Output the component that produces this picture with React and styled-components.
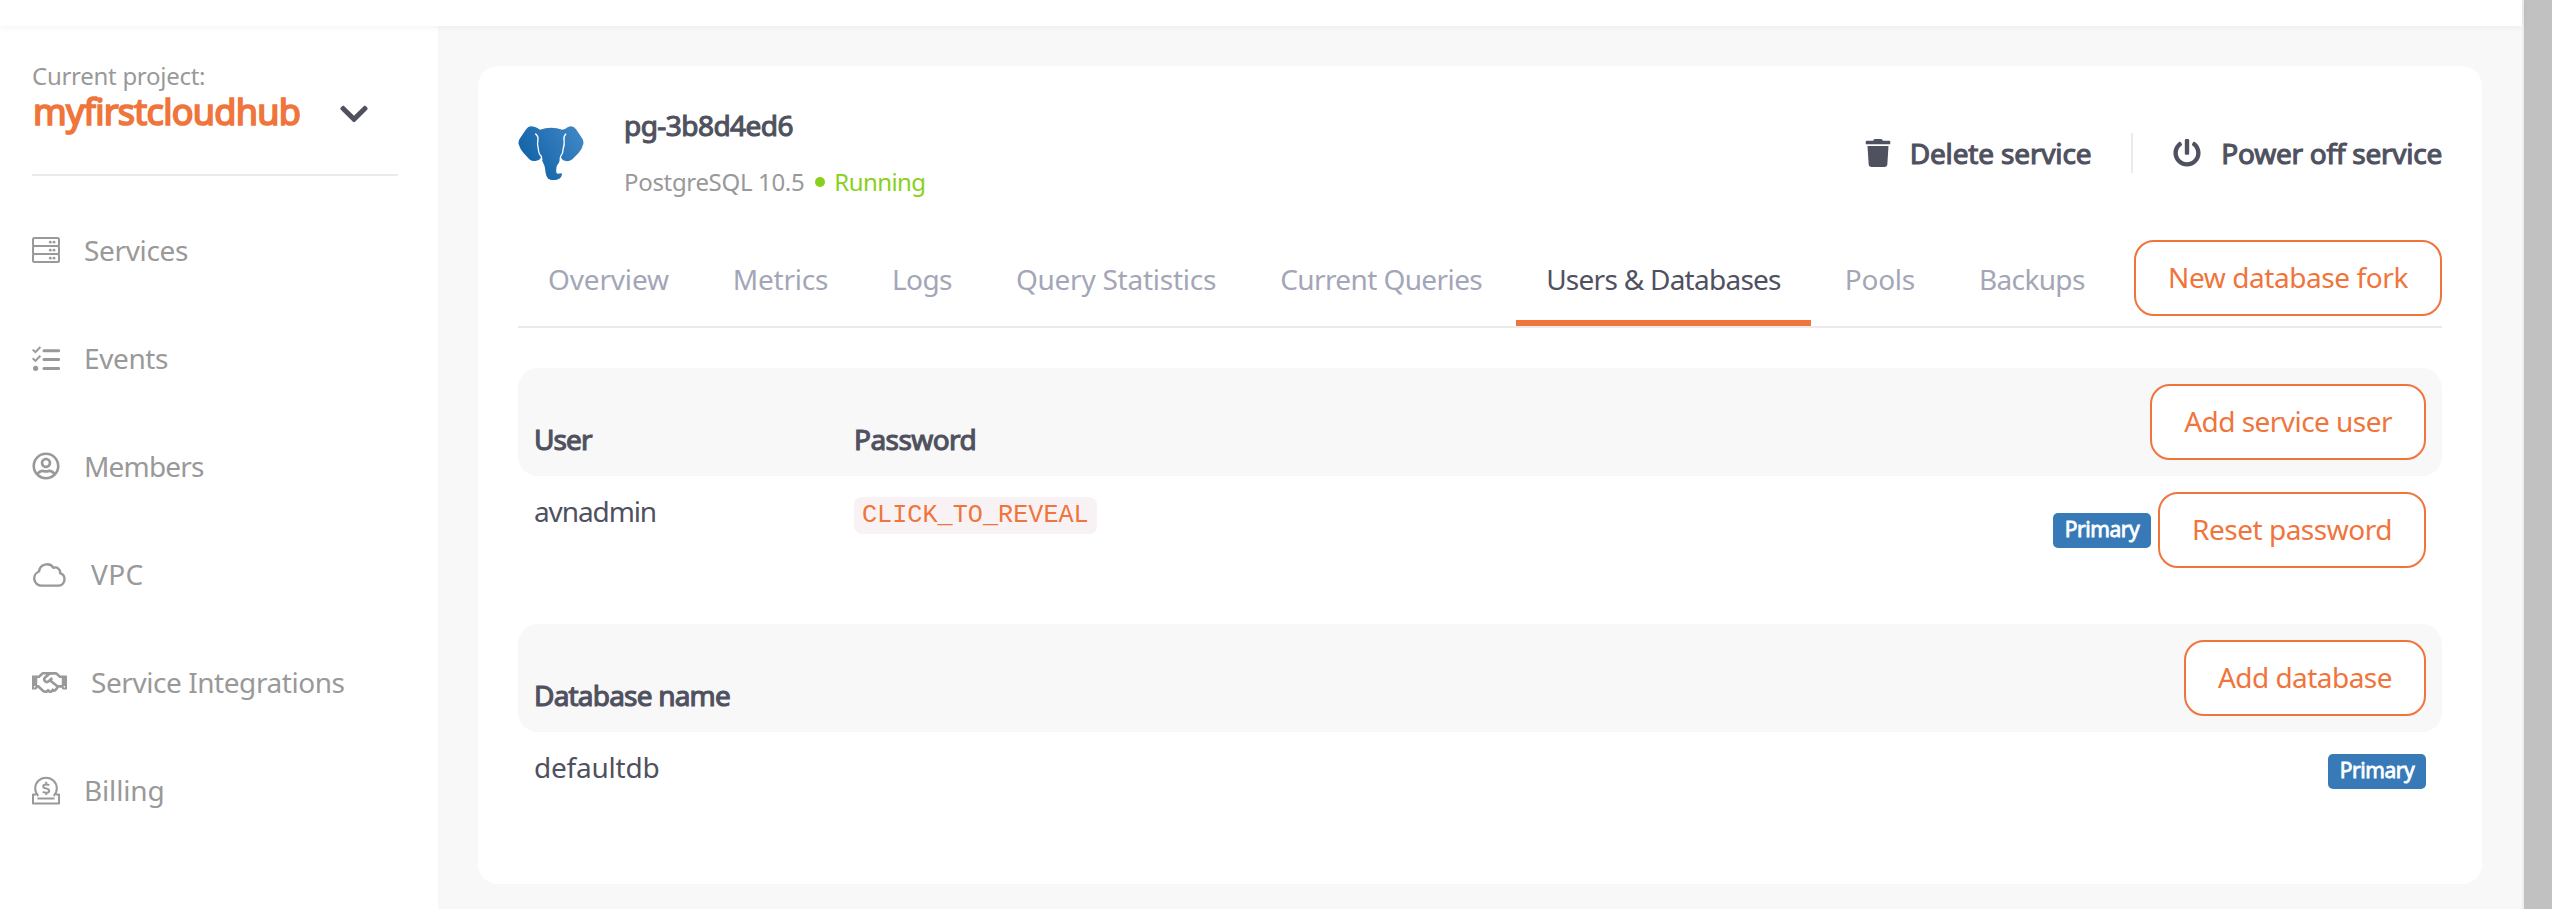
import React from 'react';
import styled, { createGlobalStyle, css } from 'styled-components';
import { FaChevronDown, FaPowerOff, FaRegHandshake, FaRegUserCircle, FaTrash } from 'react-icons/fa';

const orange = '#ef753c';
const dark = '#4f515f';
const gray = '#999';
const muted = '#a3a6b7';
const line = '#ebebeb';
const pale = '#f8f8f8';

const GlobalStyle = createGlobalStyle`
  * { box-sizing: border-box; }
  body {
    margin: 0;
    overflow: hidden;
    background: #fff;
    color: ${dark};
    font: 28px/40px "Noto Sans", "Open Sans", sans-serif;
    white-space: nowrap;
  }
  svg { display: block; flex: none; }
`;

const heavy = css`
  -webkit-text-stroke: 1.1px currentColor;
`;

const Label = styled.span`
  letter-spacing: ${(p) => p.$track ?? 0}px;
`;

const Page = styled.div`
  display: flex;
  height: 909px;
`;

const Shell = styled.div`
  flex: 1;
  min-width: 0;
  display: flex;
  flex-direction: column;
`;

const Scrollbar = styled.div`
  flex: none;
  width: 30px;
  background: #c1c1c1;
  border-left: 2px solid #eee;
`;

const TopBar = styled.header`
  position: relative;
  z-index: 1;
  flex: none;
  height: 26px;
  background: #fff;
  box-shadow: 0 0 8px rgba(0, 0, 0, 0.07);
`;

const Body = styled.div`
  flex: 1;
  display: flex;
`;

const Sidebar = styled.aside`
  flex: none;
  width: 438px;
  padding: 30px 40px 0 32px;
  background: #fff;
`;

const Project = styled.div`
  padding-bottom: 46px;
  border-bottom: 2px solid ${line};
`;

const ProjectCaption = styled.div`
  font-size: 24px;
  color: ${gray};
`;

const ProjectPicker = styled.div`
  display: flex;
  align-items: center;
  justify-content: space-between;
  height: 32px;
  padding: 0 28px 0 1px;
  font-size: 36px;
  line-height: 32px;

  ${Label} {
    ${heavy}
    -webkit-text-stroke-width: 1.7px;
    color: ${orange};
  }
  svg { position: relative; top: 2px; }
`;

const Nav = styled.nav`
  padding-top: 20px;
  color: ${gray};
`;

const NavItem = styled.a`
  display: flex;
  align-items: center;
  gap: 24px;
  height: 108px;
`;

const Main = styled.main`
  flex: 1;
  padding: 40px 40px 25px;
  background: ${pale};
`;

const Card = styled.section`
  height: 818px;
  padding: 0 40px;
  border-radius: 20px;
  background: #fff;
`;

const ServiceHeader = styled.div`
  display: flex;
  align-items: center;
  height: 174px;
`;

const ServiceInfo = styled.div`
  flex: 1;
  display: flex;
  flex-direction: column;
  gap: 17px;
  margin-left: 40px;
`;

const ServiceName = styled.div`
  ${heavy}
`;

const ServiceStatus = styled.div`
  display: flex;
  align-items: center;
  font-size: 24px;
  color: ${gray};
`;

const Running = styled.span`
  display: flex;
  align-items: center;
  gap: 9px;
  margin-left: 11px;
  color: #87d11b;

  &::before {
    content: '';
    width: 10px;
    height: 10px;
    border-radius: 50%;
    background: currentColor;
  }
`;

const HeaderAction = styled.div`
  display: flex;
  align-items: center;
  gap: ${(p) => p.$gap ?? 20}px;

  ${Label} { ${heavy} }

  & + & {
    margin-left: 40px;
    padding-left: 40px;
    border-left: 2px solid ${line};
  }
`;

const TabBar = styled.div`
  display: flex;
  gap: 4px;
  height: 88px;
  border-bottom: 2px solid ${line};
`;

const Tab = styled.a`
  height: 86px;
  padding: 0 30px;
  line-height: 78px;
  color: ${(p) => (p.$active ? dark : muted)};
  border-bottom: 6px solid ${(p) => (p.$active ? orange : 'transparent')};
`;

const OutlineButton = styled.button`
  height: 76px;
  padding: 0 32px 2px;
  border: 2px solid ${orange};
  border-radius: 20px;
  background: #fff;
  color: ${orange};
  font: inherit;
  line-height: 70px;
  ${(p) => p.$end && 'margin-left: auto;'}
`;

const Table = styled.div`
  margin-top: 40px;
`;

const TableHead = styled.div`
  display: flex;
  height: 108px;
  padding: 16px;
  border-radius: 20px;
  background: ${pale};
`;

const HeadCell = styled.div`
  align-self: flex-end;
  width: 320px;
  margin-bottom: 1px;
  ${heavy}
`;

const TableRow = styled.div`
  display: flex;
  align-items: flex-start;
  padding: 16px;
`;

const Cell = styled.div`
  width: 320px;
  line-height: 38px;
`;

const Secret = styled.code`
  display: block;
  margin-top: 5px;
  padding: 0 8px;
  border-radius: 8px;
  background: #f9f2f4;
  color: ${orange};
  font: 25.2px/37px "Liberation Mono", monospace;
`;

const RowActions = styled.div`
  display: flex;
  align-items: center;
  gap: 7px;
  margin-left: auto;
  padding-top: ${(p) => p.$offset ?? 0}px;
`;

const Badge = styled.span`
  height: 35px;
  width: 98px;
  border-radius: 5px;
  background: #377ab7;
  color: #fff;
  font-size: 21px;
  line-height: 32px;
  text-align: center;
  letter-spacing: -0.45px;
  -webkit-text-stroke: 0.8px #fff;
`;

const ServicesIcon = () => (
  <svg width="28" height="26" viewBox="0 0 28 26" fill="none" stroke="currentColor" strokeWidth="2">
    <rect x="1" y="1" width="26" height="8" rx="1.5" />
    <rect x="1" y="9" width="26" height="8" rx="1.5" />
    <rect x="1" y="17" width="26" height="8" rx="1.5" />
    <g fill="currentColor" stroke="none">
      {[5.2, 13.2, 21.2].map((y) => (
        <React.Fragment key={y}>
          <circle cx="18.3" cy={y} r="1.4" />
          <circle cx="22" cy={y} r="1.4" />
        </React.Fragment>
      ))}
    </g>
  </svg>
);

const EventsIcon = () => (
  <svg width="28" height="25" viewBox="0 0 28 25" fill="none" stroke="currentColor">
    <path d="M.7 3.6 3.4 6.2 8.4 1M.7 12.3l2.7 2.6 5-5.2" strokeWidth="2" />
    <path d="M12 4.7h14.7M12 13.4h14.7M12 22.4h14.7" strokeWidth="3" strokeLinecap="round" />
    <circle cx="3.6" cy="22.3" r="2.6" fill="currentColor" stroke="none" />
  </svg>
);

const CloudIcon = () => (
  <svg width="35" height="25" viewBox="0 0 35 25" fill="none" stroke="currentColor" strokeWidth="2.4" strokeLinejoin="round">
    <path d="M8.8 23.6A7.3 7.3 0 0 1 7 9.5A8 8 0 0 1 21.5 5.8A4.8 4.8 0 0 1 28 11.2A6.4 6.4 0 0 1 27.2 23.6Z" />
  </svg>
);

const BillingIcon = () => (
  <svg width="28" height="29" viewBox="0 0 28 29" fill="none" stroke="currentColor" strokeWidth="2" strokeLinejoin="round">
    <path d="M6.3 20A10.8 10.8 0 1 1 21.7 20" />
    <path d="M4 18.5H1V27.5H27V18.5H24M5.5 22.5H22.5" />
    <path d="M17.2 9.4C16 8.2 11.2 7.7 11.2 10.4C11.2 13 17.2 11.7 17.2 14.8C17.2 17.6 12 17.1 10.8 15.7M14.2 5.8V8M14.2 17V19" />
  </svg>
);

const PostgresLogo = () => (
  <svg width="66" height="54" viewBox="0 0 197 163">
    <defs>
      <linearGradient id="elephant" x1="0" y1="0.7" x2="1" y2="0.2">
        <stop offset="0" stopColor="#0d60a5" />
        <stop offset="1" stopColor="#4086c5" />
      </linearGradient>
    </defs>
    <path
      fill="url(#elephant)"
      d="M38 1Q29 2 24 9L7 34Q-2 46 1 55Q5 69 15 81L34 101Q43 108 54 105Q64 103 67 97L70 92Q70 105 76 114Q81 121 81 133Q83 153 91 160Q101 165 116 162Q128 160 131 149Q133 142 128 143Q119 146 115 142Q113 134 116 121Q127 106 126 93L130 97Q133 104 144 106Q154 107 163 100L181 82Q193 69 196 54Q198 45 191 35L174 10Q167 0 157 1Q148 3 142 8L133 11Q99 -1 65 11Q49 1 38 1Z"
    />
    <path
      d="M51 23Q61 30 59 43Q56 56 60 67Q61 84 69 91L71 102M144 23Q135 33 138 43Q140 56 135 70Q135 83 128 91L126 101"
      fill="none"
      stroke="#fff"
      strokeWidth="4"
    />
  </svg>
);

const navItems = [
  { text: 'Services', track: -0.34, icon: <ServicesIcon /> },
  { text: 'Events', track: -0.4, icon: <EventsIcon /> },
  { text: 'Members', track: -0.82, icon: <FaRegUserCircle size={28} /> },
  { text: 'VPC', track: 0.38, icon: <CloudIcon /> },
  { text: 'Service Integrations', track: -0.44, icon: <FaRegHandshake size={35} /> },
  { text: 'Billing', track: -0.15, icon: <BillingIcon /> },
];

const tabs = [
  { text: 'Overview', track: -0.16 },
  { text: 'Metrics', track: -0.25 },
  { text: 'Logs', track: -0.6 },
  { text: 'Query Statistics', track: -0.25 },
  { text: 'Current Queries', track: -0.6 },
  { text: 'Users & Databases', track: -0.74, active: true },
  { text: 'Pools', track: -0.26 },
  { text: 'Backups', track: -0.64 },
];

export default function App() {
  return (
    <Page>
      <GlobalStyle />
      <Shell>
        <TopBar />
        <Body>
          <Sidebar>
            <Project>
              <ProjectCaption><Label $track={-0.28}>Current project:</Label></ProjectCaption>
              <ProjectPicker>
                <Label $track={-0.74}>myfirstcloudhub</Label>
                <FaChevronDown size={32} />
              </ProjectPicker>
            </Project>
            <Nav>
              {navItems.map((item) => (
                <NavItem key={item.text}>
                  {item.icon}
                  <Label $track={item.track}>{item.text}</Label>
                </NavItem>
              ))}
            </Nav>
          </Sidebar>
          <Main>
            <Card>
              <ServiceHeader>
                <PostgresLogo />
                <ServiceInfo>
                  <ServiceName><Label $track={-0.55}>pg-3b8d4ed6</Label></ServiceName>
                  <ServiceStatus>
                    <Label $track={-0.33}>PostgreSQL 10.5</Label>
                    <Running><Label $track={-0.57}>Running</Label></Running>
                  </ServiceStatus>
                </ServiceInfo>
                <HeaderAction $gap={18}>
                  <FaTrash size={28} />
                  <Label $track={-0.16}>Delete service</Label>
                </HeaderAction>
                <HeaderAction>
                  <FaPowerOff size={28} />
                  <Label $track={-0.25}>Power off service</Label>
                </HeaderAction>
              </ServiceHeader>
              <TabBar>
                {tabs.map((tab) => (
                  <Tab key={tab.text} $active={tab.active}>
                    <Label $track={tab.track}>{tab.text}</Label>
                  </Tab>
                ))}
                <OutlineButton $end><Label $track={-0.42}>New database fork</Label></OutlineButton>
              </TabBar>
              <Table>
                <TableHead>
                  <HeadCell><Label $track={-0.89}>User</Label></HeadCell>
                  <HeadCell><Label $track={-0.55}>Password</Label></HeadCell>
                  <OutlineButton $end><Label $track={-0.54}>Add service user</Label></OutlineButton>
                </TableHead>
                <TableRow>
                  <Cell><Label $track={-1.1}>avnadmin</Label></Cell>
                  <Secret>CLICK_TO_REVEAL</Secret>
                  <RowActions>
                    <Badge>Primary</Badge>
                    <OutlineButton><Label $track={-0.48}>Reset password</Label></OutlineButton>
                  </RowActions>
                </TableRow>
              </Table>
              <Table>
                <TableHead>
                  <HeadCell><Label $track={-0.8}>Database name</Label></HeadCell>
                  <OutlineButton $end><Label $track={-0.54}>Add database</Label></OutlineButton>
                </TableHead>
                <TableRow>
                  <Cell><Label $track={-0.21}>defaultdb</Label></Cell>
                  <RowActions $offset={6}>
                    <Badge>Primary</Badge>
                  </RowActions>
                </TableRow>
              </Table>
            </Card>
          </Main>
        </Body>
      </Shell>
      <Scrollbar />
    </Page>
  );
}
